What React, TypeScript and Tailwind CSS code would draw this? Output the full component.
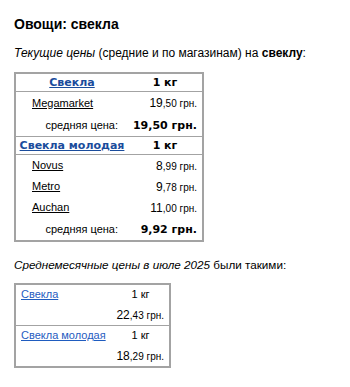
type ShopPrice = {
  shop: string;
  whole: string;
  frac: string;
};

type PriceGroup = {
  title: string;
  unit: string;
  rowH: string;
  shops: ShopPrice[];
  avg: string;
};

type MonthPrice = {
  title: string;
  unit: string;
  whole: string;
  frac: string;
};

const groups: PriceGroup[] = [
  {
    title: 'Свекла',
    unit: '1 кг',
    rowH: 'h-[22px]',
    shops: [{ shop: 'Megamarket', whole: '19', frac: ',50' }],
    avg: '19,50',
  },
  {
    title: 'Свекла молодая',
    unit: '1 кг',
    rowH: 'h-[21px]',
    shops: [
      { shop: 'Novus', whole: '8', frac: ',99' },
      { shop: 'Metro', whole: '9', frac: ',78' },
      { shop: 'Auchan', whole: '11', frac: ',00' },
    ],
    avg: '9,92',
  },
];

const monthly: MonthPrice[] = [
  { title: 'Свекла', unit: '1 кг', whole: '22', frac: ',43' },
  { title: 'Свекла молодая', unit: '1 кг', whole: '18', frac: ',29' },
];

const boldFont = "font-['DejaVu_Sans',Verdana,sans-serif] font-bold";

function Price({ whole, frac }: { whole: string; frac: string }) {
  return (
    <span className="whitespace-nowrap">
      <span className="text-[12px]">{whole}</span>
      <span className="text-[10px]">{frac} грн.</span>
    </span>
  );
}

export default function App() {
  return (
    <div className="w-[350px] h-[387px] bg-white px-[14px] pt-[14px] text-black text-[12px] font-['Liberation_Sans',Arial,sans-serif]">
      <h1 className="text-[14px] font-bold leading-[20px]">Овощи: свекла</h1>

      <p className="mt-[11px] text-[12px] leading-[16px]">
        <i>Текущие цены</i> (средние и по магазинам) на <b>свеклу</b>:
      </p>

      {/* Current prices by shop */}
      <div className="mt-[11px] w-[190px] border-2 border-[#a3a3a3]">
        {groups.map((g, gi) => (
          <div key={g.title} className={gi > 0 ? 'border-t border-[#a3a3a3]' : ''}>
            <div className="grid grid-cols-[112px_1fr] h-[18px] items-center border-b border-[#a3a3a3] text-[11px]">
              <a href="#" className={`${boldFont} text-center text-[#1a4c9c] underline leading-none`}>
                {g.title}
              </a>
              <span className={`${boldFont} text-center leading-none`}>{g.unit}</span>
            </div>
            {g.shops.map((s) => (
              <div key={s.shop} className={`grid grid-cols-[112px_1fr] ${g.rowH} items-center`}>
                <a href="#" className="pl-[16px] text-[11px] text-black underline leading-none">
                  {s.shop}
                </a>
                <span className="text-right pr-[5px] leading-none">
                  <Price whole={s.whole} frac={s.frac} />
                </span>
              </div>
            ))}
            <div className="grid grid-cols-[112px_1fr] h-[22px] items-center">
              <span className="text-right pr-[10px] text-[11px] leading-none">средняя цена:</span>
              <span className={`${boldFont} text-right pr-[5px] text-[11px] leading-none whitespace-nowrap`}>
                {g.avg} грн.
              </span>
            </div>
          </div>
        ))}
      </div>

      <p className="mt-[15px] text-[11.7px] leading-[16px]">
        <i>Среднемесячные цены в июле 2025</i> были такими:
      </p>

      {/* Monthly averages */}
      <div className="mt-[10px] w-[157px] border-2 border-[#a3a3a3]">
        {monthly.map((m, mi) => (
          <div key={m.title} className={mi > 0 ? 'border-t border-[#a3a3a3]' : ''}>
            <div className="grid grid-cols-[96px_1fr] h-[19px] items-center text-[11px]">
              <a href="#" className="pl-[5px] text-[#1f5cbf] underline leading-none whitespace-nowrap">
                {m.title}
              </a>
              <span className="text-center leading-none">{m.unit}</span>
            </div>
            <div className="flex h-[21px] items-center justify-end pr-[5px] leading-none">
              <Price whole={m.whole} frac={m.frac} />
            </div>
          </div>
        ))}
      </div>
    </div>
  );
}
